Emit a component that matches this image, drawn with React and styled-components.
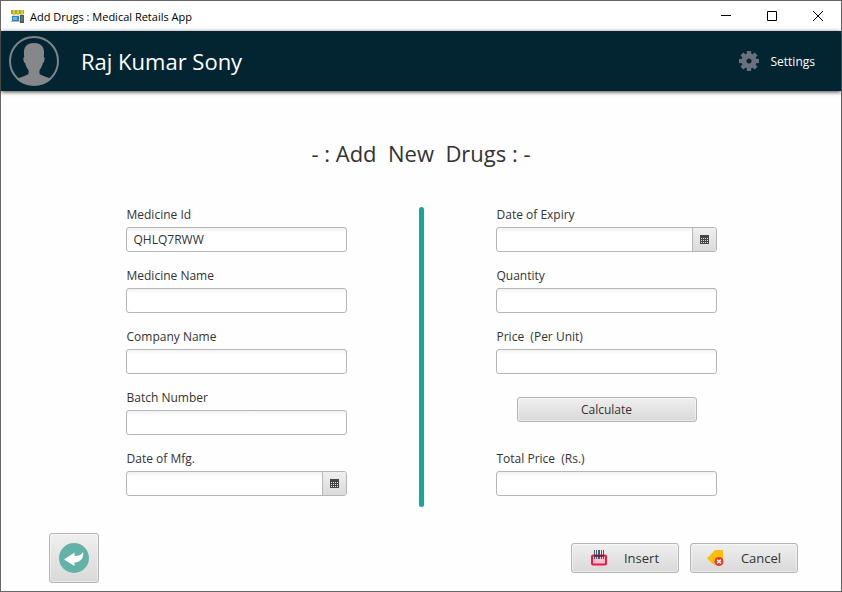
import React from "react";
import styled, { createGlobalStyle } from "styled-components";

const GlobalStyle = createGlobalStyle`
  *, *::before, *::after { box-sizing: border-box; }
  body {
    margin: 0;
    background: #fefefe;
    color: #333333;
    font-family: "Open Sans", "Noto Sans", sans-serif;
    font-size: 12px;
  }
  button, input { font: inherit; color: inherit; }
`;

const Window = styled.div`
  display: flex;
  flex-direction: column;
  min-height: 100vh;
  border: 1px solid #666666;
  background: #fefefe;
`;

const TitleBar = styled.div`
  display: flex;
  align-items: center;
  height: 30px;
  padding-left: 9px;
  background: #ffffff;
  color: #000000;
  font-size: 11px;
`;

const WindowTitle = styled.span`
  flex: 1;
  padding-left: 5px;
`;

const WindowButton = styled.button`
  display: flex;
  align-items: center;
  justify-content: center;
  width: 46px;
  height: 30px;
  padding: 0;
  border: 0;
  background: transparent;
`;

const Header = styled.header`
  display: flex;
  align-items: center;
  height: 60px;
  padding: 0 26px 0 8px;
  background: #032531;
  color: #ffffff;
  box-shadow: 0 1px 4px rgba(0, 0, 0, 0.75);
`;

const UserName = styled.span`
  flex: 1;
  padding-left: 22px;
  font-size: 22px;
`;

const SettingsButton = styled.button`
  display: flex;
  align-items: center;
  gap: 12px;
  padding: 0;
  border: 0;
  background: transparent;
  color: #ffffff;
`;

const Heading = styled.h1`
  margin: 46px 0 38px;
  font-size: 22px;
  font-weight: 400;
  line-height: 32px;
  text-align: center;
  white-space: pre;
`;

const Form = styled.form`
  display: flex;
  flex: 1;
  flex-direction: column;
  justify-content: space-between;
`;

const Fields = styled.div`
  display: grid;
  grid-template-columns: 1fr 5px 1fr;
  gap: 72px;
  width: 100%;
  max-width: 591px;
  min-height: 300px;
  margin: 0 auto;
`;

const Column = styled.div`
  display: flex;
  flex-direction: column;
  gap: 16px;
`;

const Divider = styled.div`
  border-radius: 3px;
  background: #17a697;
`;

const FieldGroup = styled.div`
  display: flex;
  flex-direction: column;
  gap: 4px;
`;

const Label = styled.label`
  padding-left: 1px;
  line-height: 16px;
  white-space: pre;
`;

const Control = styled.div`
  display: flex;
  height: 25px;
  border: 1px solid #b6b6b6;
  border-radius: 3px;
  background: linear-gradient(#f2f2f2, #ffffff 5px);
  overflow: hidden;
`;

const TextInput = styled.input`
  flex: 1;
  min-width: 0;
  padding: 0 7px;
  border: 0;
  outline: 0;
  background: transparent;
`;

const CalendarButton = styled.button`
  display: flex;
  align-items: center;
  justify-content: center;
  width: 24px;
  padding: 0;
  border: 0;
  border-left: 1px solid #b6b6b6;
  background: linear-gradient(#efefef, #dadada);
`;

const PushButton = styled.button`
  display: flex;
  align-items: center;
  justify-content: center;
  padding: 0;
  border: 1px solid #b5b5b5;
  border-radius: 3px;
  background: linear-gradient(#efefef, #d9d9d9);
  box-shadow: inset 0 0 0 1px rgba(255, 255, 255, 0.45);
`;

const CalculateRow = styled.div`
  display: flex;
  height: 45px;
  padding: 7px 20px 13px 21px;
`;

const CalculateButton = styled(PushButton)`
  flex: 1;
`;

const Footer = styled.footer`
  display: flex;
  align-items: center;
  gap: 11px;
  padding: 0 43px 8px 48px;
`;

const BackButton = styled(PushButton)`
  width: 50px;
  height: 50px;
  margin-right: auto;
`;

const ActionButton = styled(PushButton)`
  gap: 17px;
  width: 108px;
  height: 30px;
  font-size: 13px;
`;

function ShopIcon() {
  return (
    <svg width="15" height="14" viewBox="0 0 15 14" aria-hidden="true">
      <path d="M2 4h11v9H2z" fill="#dfe5e3" />
      <path d="M1 1h13v4H1z" fill="#a3ad35" />
      <path d="M3 1h2v5H3zM7 1h2v5H7zM11 1h2v5h-2z" fill="#e3cb35" />
      <path d="M2 7h7v5H2z" fill="#2d83c5" />
      <path d="M3 8h4v3H3z" fill="#67b7e9" />
      <path d="M10 6h4v8h-4z" fill="#4d5a60" />
      <path d="M11 7h2v5h-2z" fill="#5c7377" />
      <path d="M1 12h9v1H1z" fill="#aeb8bb" />
    </svg>
  );
}

function Avatar() {
  return (
    <svg width="50" height="50" viewBox="0 0 50 50" aria-hidden="true">
      <circle cx="25" cy="25" r="24" fill="none" stroke="#7b8589" strokeWidth="2" />
      <path
        d="M25 7c7.500 0 10.500 4 10 11l-.2 3c1.500.2.800 5.400-1 6.200-.6 3-1.800 5-3.300 6.800v4c3.500 2.500 8.500 2.800 11.500 5.500A24 24 0 0 1 25 49a24 24 0 0 1-17-5.500c3-2.700 8-3 11.500-5.500v-4c-1.500-1.800-2.700-3.800-3.300-6.800-1.800-.8-2.500-6-1-6.200l-.2-3c-.5-7 2.500-11 10-11z"
        fill="#858789"
      />
    </svg>
  );
}

function GearIcon() {
  const angles = [0, 45, 90, 135, 180, 225, 270, 315];
  return (
    <svg width="20" height="20" viewBox="-10 -10 20 20" aria-hidden="true">
      <g fill="#69717e">
        {angles.map((angle) => (
          <path key={angle} d="M-2-10h4l.5 5h-5z" transform={`rotate(${angle})`} />
        ))}
      </g>
      <circle r="5" fill="none" stroke="#69717e" strokeWidth="4.800" />
    </svg>
  );
}

function CalendarIcon() {
  return (
    <svg width="9" height="9" viewBox="0 0 9 9" shapeRendering="crispEdges" aria-hidden="true">
      <path d="M0 0h9v9H0z" fill="#444444" />
      <path
        d="M1 3h1v1H1zM3 3h1v1H3zM5 3h1v1H5zM7 3h1v1H7zM1 5h1v1H1zM3 5h1v1H3zM5 5h1v1H5zM7 5h1v1H7zM1 7h1v1H1zM3 7h1v1H3zM5 7h1v1H5zM7 7h1v1H7z"
        fill="#dddddd"
      />
    </svg>
  );
}

function BackIcon() {
  return (
    <svg width="30" height="30" viewBox="0 0 30 30" aria-hidden="true">
      <circle cx="15" cy="15" r="15" fill="#62b2a8" />
      <path d="M5 16.500 15.500 9.500v3.500c4 0 6.500-1 8.500-4 1 6-2 10-8.500 10.500V23z" fill="#ffffff" />
    </svg>
  );
}

function BarcodeIcon() {
  return (
    <svg width="16" height="16" viewBox="0 0 16 16" aria-hidden="true">
      <rect x="1" y="5.500" width="14" height="9" rx="1" fill="#f7c3cf" stroke="#ef1745" strokeWidth="2" />
      <path d="M3 0h1v9H3zM5 0h1v9H5zM7 0h2v9H7zM10 0h1v9h-1zM12 0h1v9h-1z" fill="#49586a" />
      <path d="M3 5h10v2H3z" fill="#601430" opacity=".65" />
    </svg>
  );
}

function CancelTagIcon() {
  return (
    <svg width="17" height="16" viewBox="0 0 17 16" aria-hidden="true">
      <path d="M0 8.500 7 1q1-1 2-1h6q1 0 1 1v14H8q-1 0-2-1z" fill="#fdbd0b" />
      <circle cx="12" cy="11.500" r="4.500" fill="#df4036" />
      <path d="m10.200 9.700 3.600 3.600m0-3.600-3.600 3.600" stroke="#ffffff" strokeWidth="1.600" />
    </svg>
  );
}

function Field({ id, label, value, date }) {
  return (
    <FieldGroup>
      <Label htmlFor={id}>{label}</Label>
      <Control>
        <TextInput id={id} type="text" defaultValue={value} />
        {date && (
          <CalendarButton type="button" aria-label={`Choose ${label}`}>
            <CalendarIcon />
          </CalendarButton>
        )}
      </Control>
    </FieldGroup>
  );
}

export default function App() {
  return (
    <>
      <GlobalStyle />
      <Window>
        <TitleBar>
          <ShopIcon />
          <WindowTitle>Add Drugs : Medical Retails App</WindowTitle>
          <WindowButton type="button" aria-label="Minimize">
            <svg width="10" height="10" viewBox="0 0 10 10"><path d="M0 4.500h10" stroke="#000000" /></svg>
          </WindowButton>
          <WindowButton type="button" aria-label="Maximize">
            <svg width="10" height="10" viewBox="0 0 10 10"><path d="M.5.5h9v9h-9z" fill="none" stroke="#000000" /></svg>
          </WindowButton>
          <WindowButton type="button" aria-label="Close">
            <svg width="10" height="10" viewBox="0 0 10 10"><path d="m0 0 10 10M10 0 0 10" stroke="#000000" /></svg>
          </WindowButton>
        </TitleBar>
        <Header>
          <Avatar />
          <UserName>Raj Kumar Sony</UserName>
          <SettingsButton type="button">
            <GearIcon />
            Settings
          </SettingsButton>
        </Header>
        <Heading>{"- : Add  New  Drugs : -"}</Heading>
        <Form>
          <Fields>
            <Column>
              <Field id="medicine-id" label="Medicine Id" value="QHLQ7RWW" />
              <Field id="medicine-name" label="Medicine Name" />
              <Field id="company-name" label="Company Name" />
              <Field id="batch-number" label="Batch Number" />
              <Field id="mfg-date" label="Date of Mfg." date />
            </Column>
            <Divider />
            <Column>
              <Field id="expiry-date" label="Date of Expiry" date />
              <Field id="quantity" label="Quantity" />
              <Field id="unit-price" label="Price  (Per Unit)" />
              <CalculateRow>
                <CalculateButton type="button">Calculate</CalculateButton>
              </CalculateRow>
              <Field id="total-price" label="Total Price  (Rs.)" />
            </Column>
          </Fields>
          <Footer>
            <BackButton type="button" aria-label="Back">
              <BackIcon />
            </BackButton>
            <ActionButton type="button">
              <BarcodeIcon />
              Insert
            </ActionButton>
            <ActionButton type="button">
              <CancelTagIcon />
              Cancel
            </ActionButton>
          </Footer>
        </Form>
      </Window>
    </>
  );
}
